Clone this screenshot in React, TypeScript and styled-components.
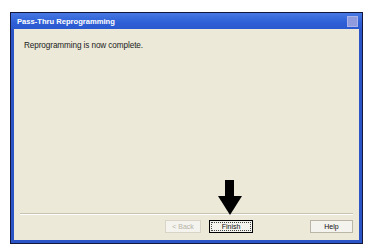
import React from 'react';
import styled, { createGlobalStyle } from 'styled-components';

const GlobalStyle = createGlobalStyle`
  html, body {
    margin: 0;
    padding: 0;
    background: #ffffff;
    font-family: "Liberation Sans", Arial, sans-serif;
  }
`;

const Page = styled.div`
  width: 372px;
  height: 251px;
  padding: 12px 0 0 10px;
  box-sizing: border-box;
  position: relative;
`;

const Window = styled.div`
  width: 353px;
  height: 232px;
  box-sizing: border-box;
  border: 1px solid #14163a;
  background: #2b55c6;
  display: flex;
  flex-direction: column;
  padding: 0 3px 3px 3px;
`;

const TitleBar = styled.div`
  height: 16px;
  margin: 0 -3px;
  padding: 0 4px 0 6px;
  display: flex;
  align-items: center;
  justify-content: space-between;
  background: linear-gradient(#4677e2, #2f5fd6 60%, #2a58cf);
  color: #ffffff;
  font-size: 7.6px;
  font-weight: bold;
`;

const CloseButton = styled.div`
  width: 11px;
  height: 11px;
  background: #8f9bdc;
  border: 1px solid #a9b3ea;
  box-sizing: border-box;
`;

const Client = styled.div`
  flex: 1;
  background: #ece9d8;
  display: flex;
  flex-direction: column;
  padding: 12px 6px 7px 6px;
`;

const Message = styled.div`
  font-size: 8.2px;
  color: #222;
  padding-left: 4px;
  letter-spacing: -0.1px;
`;

const Spacer = styled.div`
  flex: 1;
`;

const Separator = styled.div`
  height: 0;
  border-top: 1px solid #c8c4b4;
  border-bottom: 1px solid #ffffff;
  margin-bottom: 5px;
`;

const ButtonRow = styled.div`
  display: flex;
  align-items: center;
  justify-content: flex-end;
`;

const Button = styled.div<{ $variant?: 'disabled' | 'default' | 'normal'; $width: number; $gap?: number }>`
  width: ${(p) => p.$width}px;
  margin-left: ${(p) => p.$gap ?? 0}px;
  height: 13px;
  box-sizing: border-box;
  display: flex;
  align-items: center;
  justify-content: center;
  font-size: 7px;
  background: #f4f3ee;
  color: ${(p) => (p.$variant === 'disabled' ? '#b6b3a6' : '#111')};
  border: 1px solid
    ${(p) => (p.$variant === 'default' ? '#000000' : p.$variant === 'disabled' ? '#d8d5c8' : '#b9b6a8')};
  position: relative;
`;

const FocusRect = styled.div`
  position: absolute;
  inset: 1px;
  border: 1px dotted #444;
`;

const Arrow = styled.svg`
  position: absolute;
  left: 218px;
  top: 180px;
`;

export default function App() {
  return (
    <>
      <GlobalStyle />
      <Page>
        <Window>
          <TitleBar>
            <span>Pass-Thru Reprogramming</span>
            <CloseButton />
          </TitleBar>
          <Client>
            <Message>Reprogramming is now complete.</Message>
            <Spacer />
            <Separator />
            <ButtonRow>
              <Button $variant="disabled" $width={36}>&lt; Back</Button>
              <Button $variant="default" $width={44} $gap={8}>
                <FocusRect />
                Finish
              </Button>
              <Button $variant="normal" $width={43} $gap={57}>Help</Button>
            </ButtonRow>
          </Client>
        </Window>
        <Arrow width="24" height="35" viewBox="0 0 24 35">
          <rect x="7" y="0" width="9" height="17" fill="#000" />
          <polygon points="0,16 24,16 12,35" fill="#000" />
        </Arrow>
      </Page>
    </>
  );
}
